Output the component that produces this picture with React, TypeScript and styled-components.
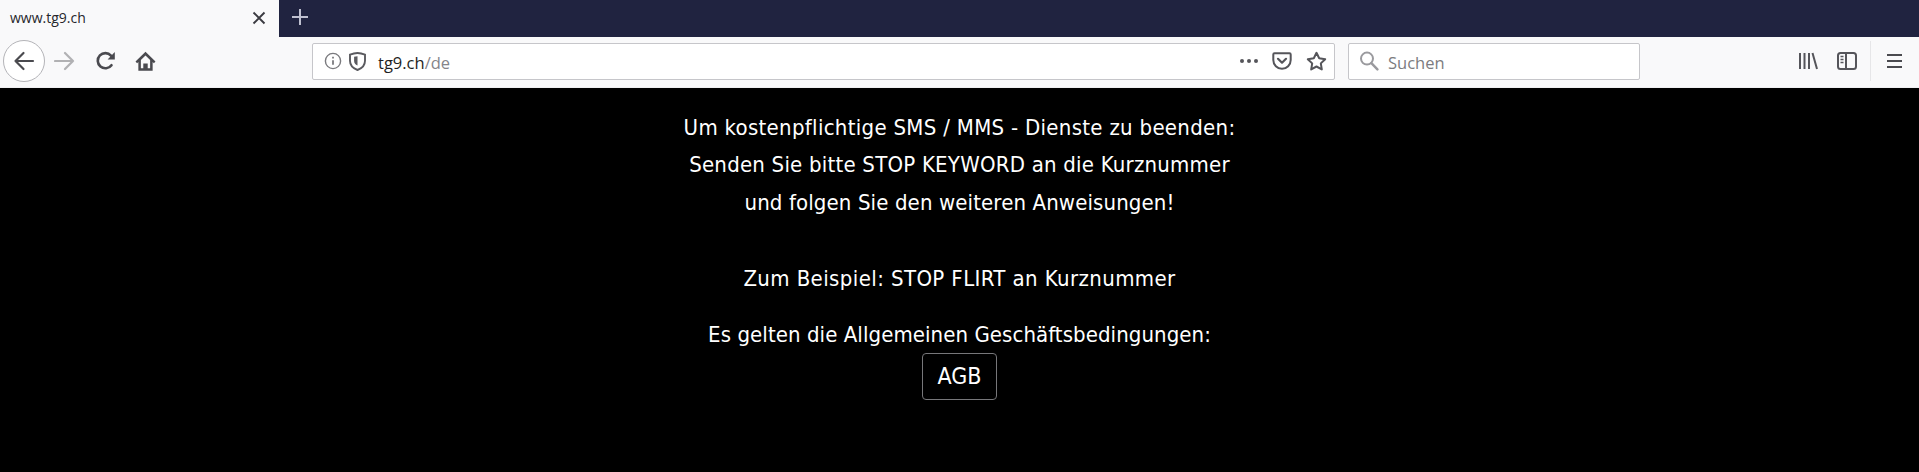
import React from 'react';
import styled, { createGlobalStyle } from 'styled-components';

const GlobalStyle = createGlobalStyle`
  html, body {
    margin: 0;
    padding: 0;
    height: 100%;
    background: #000;
    overflow: hidden;
  }
`;

const Page = styled.div`
  display: flex;
  flex-direction: column;
  width: 1919px;
  height: 472px;
`;

const TabStrip = styled.div`
  display: flex;
  height: 37px;
  background: #202340;
`;

const Tab = styled.div`
  display: flex;
  align-items: center;
  justify-content: space-between;
  box-sizing: border-box;
  width: 279px;
  padding: 0 12px 2px 10px;
  background: #f9f9fa;
  color: #26262b;
  font: 14px "Open Sans", sans-serif;
`;

const NewTab = styled.div`
  display: flex;
  align-items: center;
  padding: 0 0 3px 12px;
`;

const NavBar = styled.div`
  display: flex;
  align-items: center;
  box-sizing: border-box;
  height: 51px;
  padding: 0 0 2px 3px;
  background: #f9f9fa;
  border-bottom: 1px solid #f0f0f2;
`;

const BackButton = styled.div`
  display: flex;
  align-items: center;
  justify-content: center;
  box-sizing: border-box;
  width: 42px;
  height: 42px;
  border: 1px solid #b4b4b8;
  border-radius: 50%;
  background: #fff;
`;

const NavIcon = styled.div<{ $left: number }>`
  display: flex;
  margin-left: ${p => p.$left}px;
`;

const Field = styled.div<{ $width: number; $left: number }>`
  display: flex;
  align-items: center;
  box-sizing: border-box;
  width: ${p => p.$width}px;
  height: 37px;
  margin-left: ${p => p.$left}px;
  background: #fff;
  border: 1px solid #c6c6ca;
  border-radius: 2px;
  font: 16.5px "Open Sans", sans-serif;
`;

const UrlText = styled.span`
  margin: 2px 0 0 12px;
  color: #1f1f23;
`;

const UrlPath = styled.span`
  color: #85858a;
`;

const Spacer = styled.div`
  flex: 1;
`;

const Placeholder = styled.span`
  margin: 2px 0 0 9px;
  color: #7c7c80;
`;

const Divider = styled.div`
  width: 1px;
  height: 40px;
  margin-left: 13px;
  background: #e6e6e8;
`;

const Content = styled.main`
  display: flex;
  flex: 1;
  flex-direction: column;
  align-items: center;
  padding-top: 21px;
  background: #000;
  color: #fff;
  font: 22px/37px "DejaVu Sans Condensed", "DejaVu Sans", sans-serif;
`;

const Line = styled.div<{ $top?: number; $spacing: number }>`
  margin-top: ${p => p.$top ?? 0}px;
  letter-spacing: ${p => p.$spacing}px;
  white-space: nowrap;
`;

const AgbButton = styled.a`
  display: flex;
  align-items: center;
  justify-content: center;
  box-sizing: border-box;
  width: 75px;
  height: 47px;
  border: 1px solid #77777a;
  border-radius: 4px;
  color: #fff;
  font-size: 23px;
`;

const Stroke = styled.svg.attrs({ fill: 'none', strokeLinecap: 'round', strokeLinejoin: 'round' })`
  display: block;
`;

export default function App() {
  return (
    <Page>
      <GlobalStyle />
      <TabStrip>
        <Tab>
          www.tg9.ch
          <Stroke width="16" height="16" viewBox="0 0 16 16" stroke="#3a3a40" strokeWidth="1.9">
            <path d="M2.5 2.5l11 11M13.5 2.5l-11 11" strokeLinecap="butt" />
          </Stroke>
        </Tab>
        <NewTab>
          <Stroke width="18" height="18" viewBox="0 0 18 18" stroke="#bfc0d0" strokeWidth="2">
            <path d="M9 1v16M1 9h16" strokeLinecap="butt" />
          </Stroke>
        </NewTab>
      </TabStrip>
      <NavBar>
        <BackButton>
          <Stroke width="22" height="20" viewBox="0 0 22 20" stroke="#4a4a4f" strokeWidth="2.2">
            <path d="M20 10H2.5M10.5 2l-8 8 8 8" />
          </Stroke>
        </BackButton>
        <NavIcon $left={9}>
          <Stroke width="22" height="20" viewBox="0 0 22 20" stroke="#b1b1b3" strokeWidth="2.2">
            <path d="M1 10h18M11 2l8 8-8 8" />
          </Stroke>
        </NavIcon>
        <NavIcon $left={20}>
          <Stroke width="20" height="20" viewBox="0 0 20 20" stroke="#4a4a4f" strokeWidth="2.6">
            <path d="M15.5 14.2A7.6 7.6 0 1 1 15 4.6" />
            <path d="M18.8 1v7.4H11.6z" fill="#4a4a4f" stroke="none" />
          </Stroke>
        </NavIcon>
        <NavIcon $left={19}>
          <svg width="21" height="21" viewBox="0 0 20 20">
            <path d="M10 .8L0.5 10l1.5 1.6L3.2 10.4v8.3h13.6v-8.3l1.2 1.2 1.5-1.6zM10 4.2l4.4 4.3v7.9h-2.3v-4.6H7.9v4.6H5.6V8.5z" fill="#4a4a4f" />
            <rect x="8.9" y="12.8" width="2.2" height="2" fill="#4a4a4f" />
          </svg>
        </NavIcon>
        <Field $width={1023} $left={156}>
          <NavIcon $left={11}>
            <Stroke width="18" height="18" viewBox="0 0 18 18" stroke="#7a7a7e" strokeWidth="1.4">
              <circle cx="9" cy="9" r="7.6" />
              <path d="M9 8.2v4.6" strokeWidth="1.8" strokeLinecap="butt" />
              <path d="M9 4.8v1.8" strokeWidth="1.8" strokeLinecap="butt" />
            </Stroke>
          </NavIcon>
          <NavIcon $left={7}>
            <svg width="17" height="19" viewBox="0 0 17 19">
              <path d="M8.5 1C6 1 3.5 1.6 1 2.6v6.2c0 4.4 3 7.6 7.5 9.2 4.5-1.6 7.5-4.8 7.5-9.2V2.6C13.5 1.6 11 1 8.5 1z" fill="none" stroke="#5a5a5f" strokeWidth="1.9" />
              <path d="M8.5 4.2c-1.2 0-2.3.2-3.4.6v4.2c0 2 1.3 3.5 3.4 4.5z" fill="#5a5a5f" />
            </svg>
          </NavIcon>
          <UrlText>
            tg9.ch<UrlPath>/de</UrlPath>
          </UrlText>
          <Spacer />
          <svg width="20" height="6" viewBox="0 0 20 6">
            <circle cx="3" cy="3" r="2" fill="#55555a" />
            <circle cx="10" cy="3" r="2" fill="#55555a" />
            <circle cx="17" cy="3" r="2" fill="#55555a" />
          </svg>
          <NavIcon $left={13}>
            <Stroke width="20" height="18" viewBox="0 0 20 18" stroke="#55555a" strokeWidth="2">
              <path d="M2.5 1.2h15c.7 0 1.2.5 1.2 1.2v5.6c0 4.9-3.9 8.8-8.7 8.8S1.3 12.9 1.3 8V2.4c0-.7.5-1.2 1.2-1.2z" />
              <path d="M6 6.8l4 3.9 4-3.9" strokeWidth="2.2" />
            </Stroke>
          </NavIcon>
          <NavIcon $left={14}>
            <Stroke width="21" height="20" viewBox="0 0 21 20" stroke="#55555a" strokeWidth="2">
              <path d="M10.5 1.8l2.7 5.5 6 .9-4.4 4.2 1 6-5.3-2.9-5.3 2.9 1-6-4.4-4.2 6-.9z" />
            </Stroke>
          </NavIcon>
          <NavIcon $left={7} />
        </Field>
        <Field $width={292} $left={13}>
          <NavIcon $left={10}>
            <Stroke width="20" height="20" viewBox="0 0 20 20" stroke="#9a9a9e" strokeWidth="2">
              <circle cx="8" cy="7.6" r="6" />
              <path d="M12.4 12.2l6 6.2" strokeWidth="2.4" />
            </Stroke>
          </NavIcon>
          <Placeholder>Suchen</Placeholder>
        </Field>
        <Spacer />
        <Stroke width="20" height="18" viewBox="0 0 20 18" stroke="#55555a" strokeWidth="2">
          <path d="M2 1v16M6.5 1v16M11 1v16M14.5 1l4.5 16" strokeLinecap="butt" />
        </Stroke>
        <NavIcon $left={19}>
          <svg width="20" height="18" viewBox="0 0 20 18">
            <rect x="1" y="1" width="18" height="16" rx="2.5" fill="none" stroke="#55555a" strokeWidth="2" />
            <path d="M9 1v16" stroke="#55555a" strokeWidth="2" />
            <path d="M3.5 4.5h3M3.5 7.5h3M3.5 10.5h3" stroke="#55555a" strokeWidth="1.4" />
          </svg>
        </NavIcon>
        <Divider />
        <NavIcon $left={15}>
          <Stroke width="17" height="16" viewBox="0 0 17 16" stroke="#4a4a4f" strokeWidth="2.2">
            <path d="M1 2h15M1 8h15M1 14h15" strokeLinecap="butt" />
          </Stroke>
        </NavIcon>
        <NavIcon $left={16} />
      </NavBar>
      <Content>
        <Line $spacing={0.3}>Um kostenpflichtige SMS / MMS - Dienste zu beenden:</Line>
        <Line $spacing={0.22}>Senden Sie bitte STOP KEYWORD an die Kurznummer</Line>
        <Line $spacing={0.12} $top={1}>und folgen Sie den weiteren Anweisungen!</Line>
        <Line $spacing={0.4} $top={39}>Zum Beispiel: STOP FLIRT an Kurznummer</Line>
        <Line $spacing={0.07} $top={19}>Es gelten die Allgemeinen Geschäftsbedingungen:</Line>
        <AgbButton>AGB</AgbButton>
      </Content>
    </Page>
  );
}
